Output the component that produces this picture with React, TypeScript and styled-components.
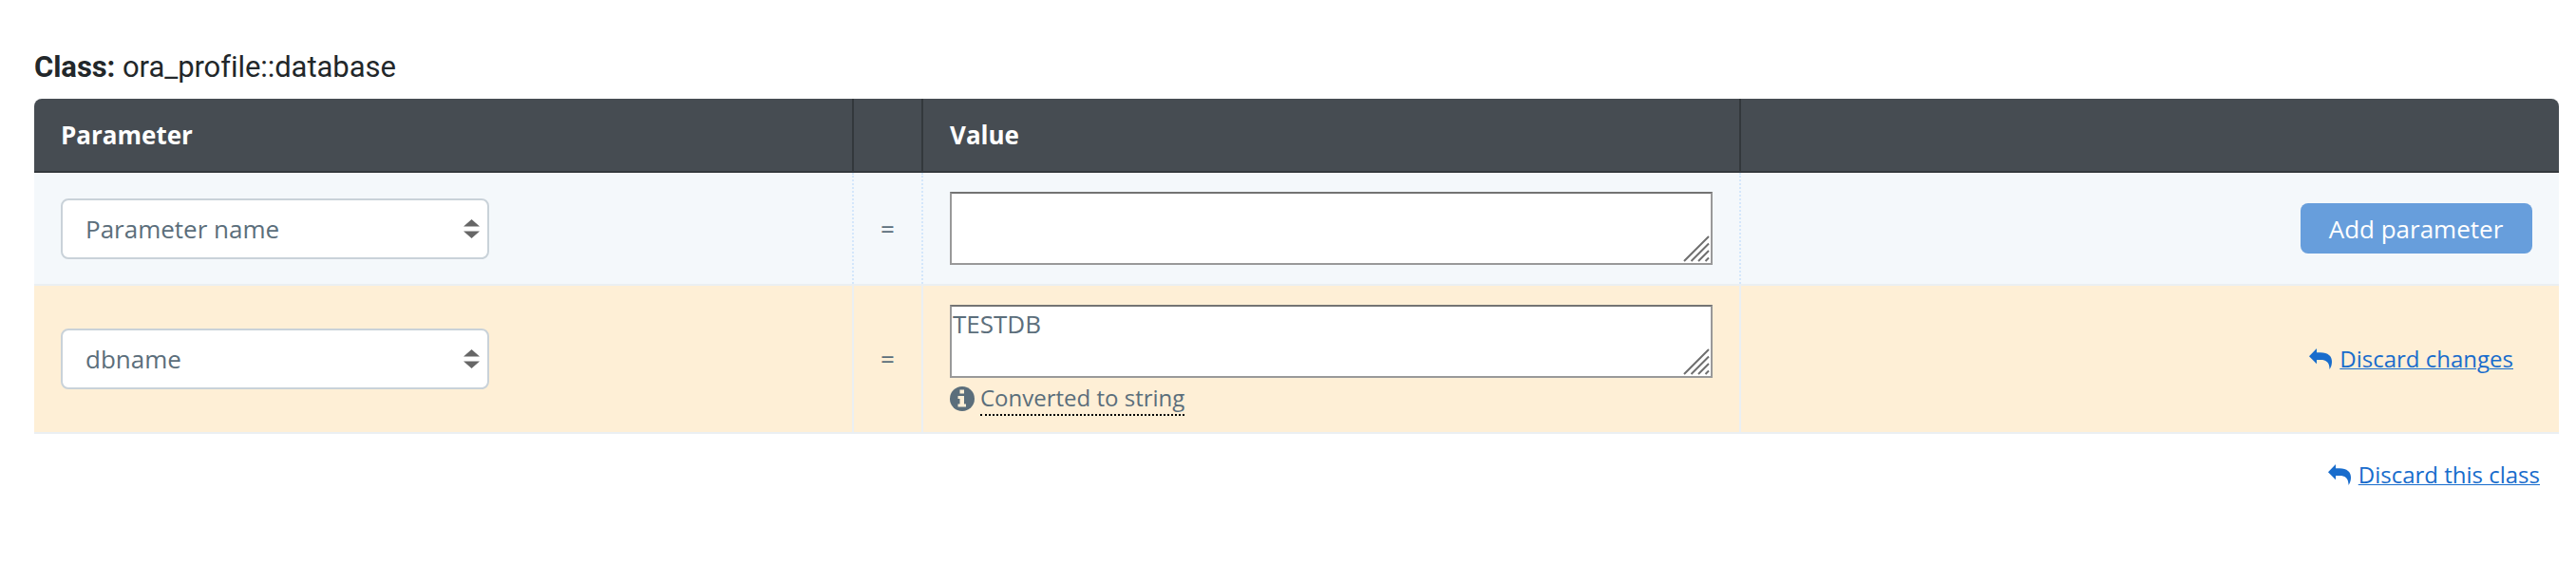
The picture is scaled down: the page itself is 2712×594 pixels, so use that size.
import React from "react";
import styled, { createGlobalStyle } from "styled-components";

const GlobalStyle = createGlobalStyle`
  *, *::before, *::after { box-sizing: border-box; }
  body {
    margin: 0;
    background: #fff;
    color: #5b6e7b;
    font-family: "Open Sans", sans-serif;
    font-size: 26px;
    line-height: 36px;
  }
`;

const Page = styled.main`
  height: 594px;
  padding: 51px 18px 0 36px;
  overflow: hidden;
`;

const Title = styled.h1`
  margin: 0 0 13px;
  height: 40px;
  line-height: 40px;
  color: #22272a;
  font-family: Roboto, sans-serif;
  font-size: 31px;
  font-weight: 400;
  letter-spacing: -0.06px;
  white-space: pre;
`;

const TitleLabel = styled.strong`
  font-weight: 700;
`;

const Table = styled.section`
  display: flex;
  flex-direction: column;
`;

const Row = styled.div<{ $height: number; $changed?: boolean }>`
  display: grid;
  grid-template-columns: 863px 73px 861px 1fr;
  height: ${(p) => p.$height}px;
  background: ${(p) => (p.$changed ? "#feefd6" : "#f4f8fb")};
  border-bottom: 2px solid #ebeff2;
`;

const HeaderRow = styled(Row)`
  background: #464c52;
  border-bottom-color: #33383c;
  border-radius: 8px 8px 0 0;
  color: #fff;
  font-weight: 700;
`;

const Cell = styled.div<{ $divider?: string; $align?: string; $inset?: number }>`
  display: flex;
  align-items: center;
  justify-content: ${(p) => p.$align || "flex-start"};
  padding: 0 ${(p) => p.$inset ?? 28}px 0 28px;
  border-right: ${(p) => (p.$divider ? `2px ${p.$divider}` : "0")};
`;

const ValueCell = styled(Cell)`
  flex-direction: column;
  align-items: flex-start;
  padding-top: 20px;
`;

const Select = styled.button`
  display: flex;
  align-items: center;
  justify-content: space-between;
  width: 451px;
  height: 64px;
  padding: 0 8px 0 24px;
  border: 2px solid #c9d2d9;
  border-radius: 8px;
  background: #fff;
  color: inherit;
  font: inherit;
`;

const AreaWrap = styled.div`
  position: relative;
  width: 803px;
  height: 77px;
`;

const Area = styled.textarea`
  display: block;
  width: 100%;
  height: 100%;
  padding: 0 1px;
  resize: none;
  overflow: hidden;
  border: 2px solid #999;
  border-top-color: #737373;
  border-radius: 0;
  background: #fff;
  color: inherit;
  font: inherit;
`;

const Grip = styled.svg`
  position: absolute;
  right: 3px;
  bottom: 3px;
`;

const Note = styled.div`
  display: flex;
  align-items: flex-start;
  gap: 6px;
  margin-top: 4px;
  font-size: 24px;
`;

const NoteIcon = styled.svg`
  margin-top: 5px;
`;

const NoteText = styled.span`
  height: 36px;
  line-height: 34px;
  border-bottom: 2px dotted #000;
`;

const AddButton = styled.button`
  width: 244px;
  height: 53px;
  padding: 0 1px 0 0;
  border: 0;
  border-radius: 8px;
  background: #679edc;
  color: #fff;
  font: inherit;
`;

const LinkWrap = styled.a`
  display: flex;
  align-items: center;
  gap: 8px;
  color: #186ccc;
  font-size: 24px;
`;

const LinkText = styled.span`
  text-decoration: underline;
  text-decoration-thickness: 1px;
`;

const Footer = styled.footer`
  display: flex;
  justify-content: flex-end;
  padding: 25px 20px 0 0;
`;

const Arrows = () => (
  <svg width="17" height="20" viewBox="0 0 17 20" fill="#666">
    <path d="M8.5 0L17 7.5H0Z" />
    <path d="M0 12.5H17L8.5 20Z" />
  </svg>
);

const ValueArea = ({ value }: { value: string }) => (
  <AreaWrap>
    <Area defaultValue={value} spellCheck={false} />
    <Grip width="28" height="28" viewBox="0 0 28 28" stroke="#6f6f6f" strokeWidth="2">
      <path d="M1 27L27 1M8.5 27L27 8.5M16 27L27 16M23.5 27L27 23.5" />
    </Grip>
  </AreaWrap>
);

const DiscardLink = ({ label }: { label: string }) => (
  <LinkWrap>
    <svg width="24" height="22" viewBox="0 0 24 22" fill="#186ccc">
      <path d="M0 8.2L8 0V4.2H12C20 4.2 24 8 24 14C24 17 23 20 21.5 22C21.6 14.5 18 12 12 12H8V16.2Z" />
    </svg>
    <LinkText>{label}</LinkText>
  </LinkWrap>
);

const DARK = "solid #33383c";
const DOTTED = "dotted #d4e7fb";
const LIGHT = "solid #ebeff2";

export default function App() {
  return (
    <>
      <GlobalStyle />
      <Page>
        <Title>
          <TitleLabel>Class:</TitleLabel> ora_profile::database
        </Title>
        <Table>
          <HeaderRow $height={78}>
            <Cell $divider={DARK}>Parameter</Cell>
            <Cell $divider={DARK} />
            <Cell $divider={DARK}>Value</Cell>
            <Cell />
          </HeaderRow>
          <Row $height={119}>
            <Cell $divider={DOTTED}>
              <Select>
                Parameter name <Arrows />
              </Select>
            </Cell>
            <Cell $divider={DOTTED} $align="center">=</Cell>
            <ValueCell $divider={DOTTED}>
              <ValueArea value="" />
            </ValueCell>
            <Cell $align="flex-end">
              <AddButton>Add parameter</AddButton>
            </Cell>
          </Row>
          <Row $height={156} $changed>
            <Cell $divider={LIGHT}>
              <Select>
                dbname <Arrows />
              </Select>
            </Cell>
            <Cell $divider={LIGHT} $align="center">=</Cell>
            <ValueCell $divider={LIGHT}>
              <ValueArea value="TESTDB" />
              <Note>
                <NoteIcon width="26" height="26" viewBox="0 0 26 26">
                  <circle cx="13" cy="13" r="13" fill="#5b6e7b" />
                  <path d="M10.5 3.5H15V7.5H10.5ZM8.5 10H15V18.5H17V21.5H8.5V18.5H10.5V13H8.5Z" fill="#feefd6" />
                </NoteIcon>
                <NoteText>Converted to string</NoteText>
              </Note>
            </ValueCell>
            <Cell $align="flex-end" $inset={48}>
              <DiscardLink label="Discard changes" />
            </Cell>
          </Row>
        </Table>
        <Footer>
          <DiscardLink label="Discard this class" />
        </Footer>
      </Page>
    </>
  );
}
